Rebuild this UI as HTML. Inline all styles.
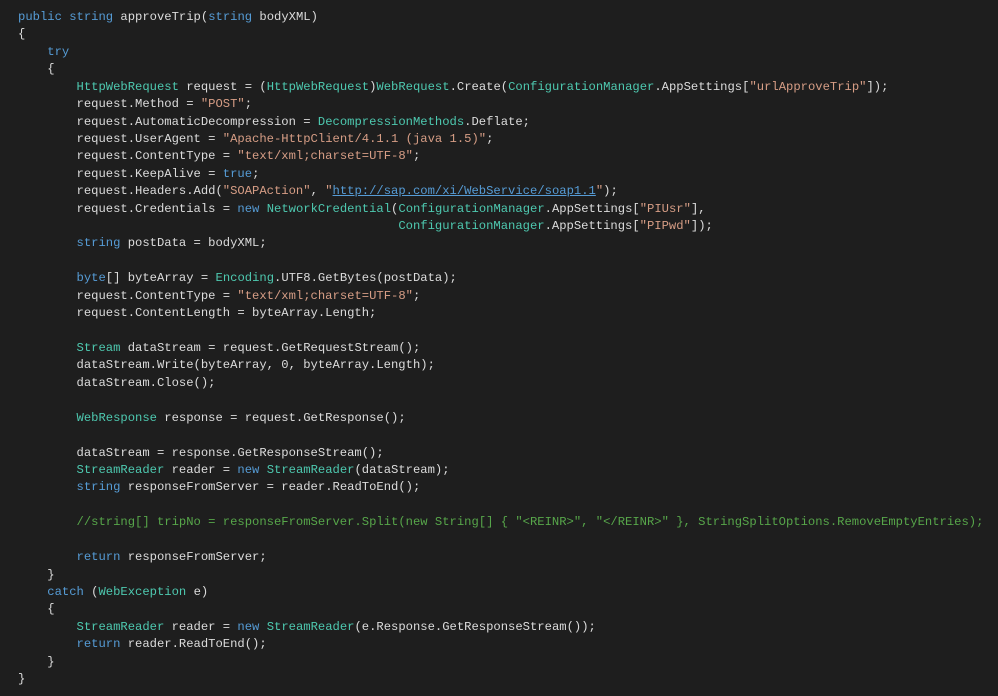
<!DOCTYPE html>
<html><head><meta charset="utf-8"><style>
html,body{margin:0;padding:0;background:#1e1e1e;width:998px;height:696px;overflow:hidden}
pre{margin:0;padding:9px 0 0 18px;font-family:"Liberation Mono",monospace;font-size:12.2px;line-height:17.42px;color:#dcdcdc}
.k{color:#569cd6}.t{color:#4ec9b0}.s{color:#d69d85}.c{color:#57a64a}.u{color:#569cd6;text-decoration:underline}
</style></head><body><pre><span class="k">public</span> <span class="k">string</span> approveTrip(<span class="k">string</span> bodyXML)
{
    <span class="k">try</span>
    {
        <span class="t">HttpWebRequest</span> request = (<span class="t">HttpWebRequest</span>)<span class="t">WebRequest</span>.Create(<span class="t">ConfigurationManager</span>.AppSettings[<span class="s">"urlApproveTrip"</span>]);
        request.Method = <span class="s">"POST"</span>;
        request.AutomaticDecompression = <span class="t">DecompressionMethods</span>.Deflate;
        request.UserAgent = <span class="s">"Apache-HttpClient/4.1.1 (java 1.5)"</span>;
        request.ContentType = <span class="s">"text/xml;charset=UTF-8"</span>;
        request.KeepAlive = <span class="k">true</span>;
        request.Headers.Add(<span class="s">"SOAPAction"</span>, <span class="s">"</span><span class="u">http://sap.com/xi/WebService/soap1.1</span><span class="s">"</span>);
        request.Credentials = <span class="k">new</span> <span class="t">NetworkCredential</span>(<span class="t">ConfigurationManager</span>.AppSettings[<span class="s">"PIUsr"</span>],
                                                    <span class="t">ConfigurationManager</span>.AppSettings[<span class="s">"PIPwd"</span>]);
        <span class="k">string</span> postData = bodyXML;

        <span class="k">byte</span>[] byteArray = <span class="t">Encoding</span>.UTF8.GetBytes(postData);
        request.ContentType = <span class="s">"text/xml;charset=UTF-8"</span>;
        request.ContentLength = byteArray.Length;

        <span class="t">Stream</span> dataStream = request.GetRequestStream();
        dataStream.Write(byteArray, 0, byteArray.Length);
        dataStream.Close();

        <span class="t">WebResponse</span> response = request.GetResponse();

        dataStream = response.GetResponseStream();
        <span class="t">StreamReader</span> reader = <span class="k">new</span> <span class="t">StreamReader</span>(dataStream);
        <span class="k">string</span> responseFromServer = reader.ReadToEnd();

        <span class="c">//string[] tripNo = responseFromServer.Split(new String[] { "&lt;REINR&gt;", "&lt;/REINR&gt;" }, StringSplitOptions.RemoveEmptyEntries);</span>

        <span class="k">return</span> responseFromServer;
    }
    <span class="k">catch</span> (<span class="t">WebException</span> e)
    {
        <span class="t">StreamReader</span> reader = <span class="k">new</span> <span class="t">StreamReader</span>(e.Response.GetResponseStream());
        <span class="k">return</span> reader.ReadToEnd();
    }
}</pre></body></html>
